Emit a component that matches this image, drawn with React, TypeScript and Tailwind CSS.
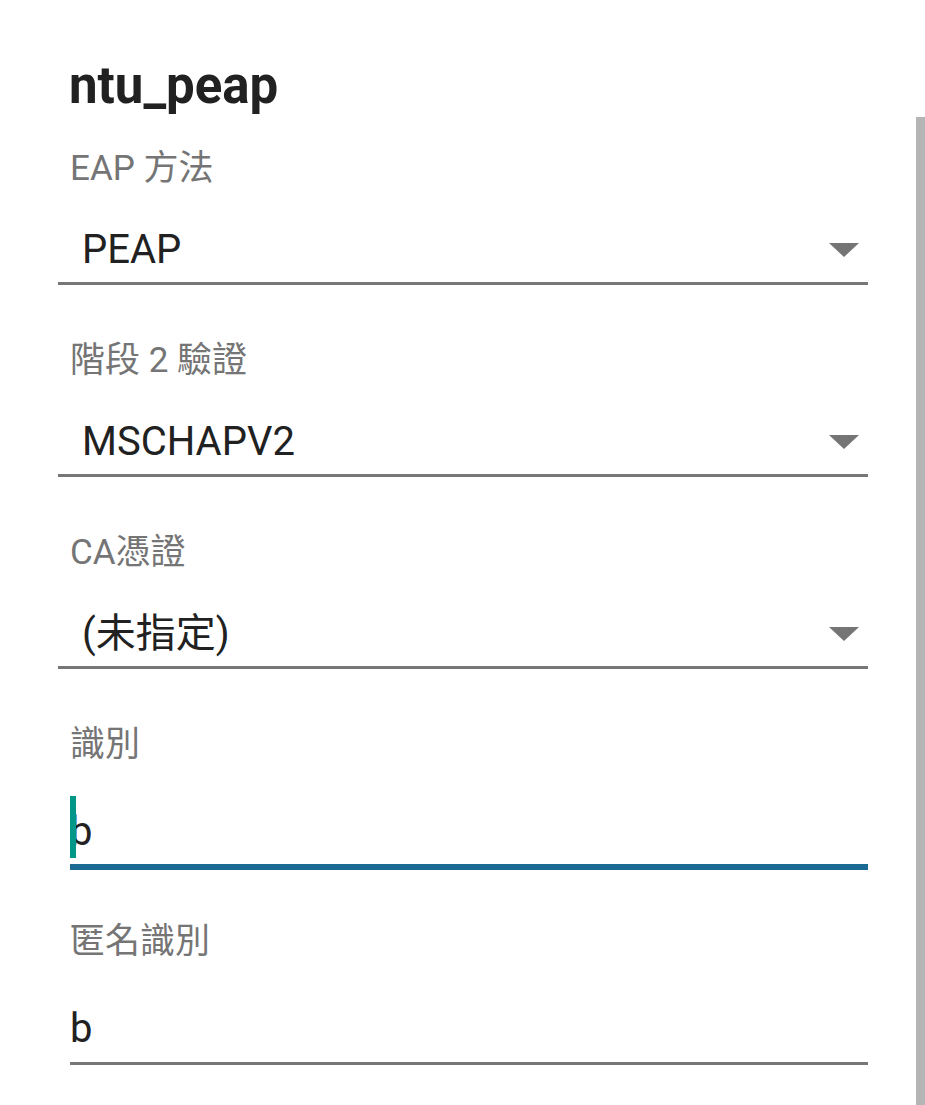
import React from 'react';

const font = { fontFamily: 'Roboto, "Noto Sans CJK TC", sans-serif' };

const Caret = () => (
    <svg width="30" height="14" viewBox="0 0 30 14" className="block">
        <polygon points="0,0 30,0 15,14" fill="#757575" />
    </svg>
);

const Spinner = ({ label, value, first }: { label: string; value: string; first?: boolean }) => (
    <div className={first ? 'mt-[40px]' : 'mt-[58px]'}>
        <div className="pl-[12px] text-[35px] leading-[35px] text-[#757575]">{label}</div>
        <div className="mt-[44px] flex items-center justify-between pl-[24px] pr-[9px]">
            <span className="text-[40px] leading-[40px] text-[#212121]">{value}</span>
            <Caret />
        </div>
        <div className="mt-[12px] h-[3px] bg-[#777777]" />
    </div>
);

export default function App() {
    return (
        <div style={font} className="relative h-[1105px] w-[925px] overflow-hidden bg-white">
            <div className="w-[868px] pl-[58px]">
                <div className="ml-[11px] pt-[61px] text-[51px] font-bold leading-[50px] text-[#212121]">ntu_peap</div>

                <Spinner first label="EAP 方法" value="PEAP" />
                <Spinner label="階段 2 驗證" value="MSCHAPV2" />
                <Spinner label="CA憑證" value="(未指定)" />

                {/* identity, focused */}
                <div className="ml-[12px] mt-[58px]">
                    <div className="text-[35px] leading-[35px] text-[#757575]">識別</div>
                    <div className="relative mt-[34px] pb-[6px] pt-[16px]">
                        <span className="absolute inset-y-0 left-0 w-[6px] bg-[#009688]" />
                        <div className="text-[40px] leading-[40px] text-[#212121]">b</div>
                    </div>
                    <div className="mt-[6px] h-[6px] bg-[#1b6a94]" />
                </div>

                {/* anonymous identity */}
                <div className="ml-[12px] mt-[54px]">
                    <div className="text-[35px] leading-[35px] text-[#757575]">匿名識別</div>
                    <div className="mt-[50px] text-[40px] leading-[40px] text-[#212121]">b</div>
                    <div className="mt-[13px] h-[3px] bg-[#777777]" />
                </div>
            </div>

            <div className="absolute bottom-0 right-0 top-[117px] w-[9px] bg-[#b5b5b5]" />
        </div>
    );
}
